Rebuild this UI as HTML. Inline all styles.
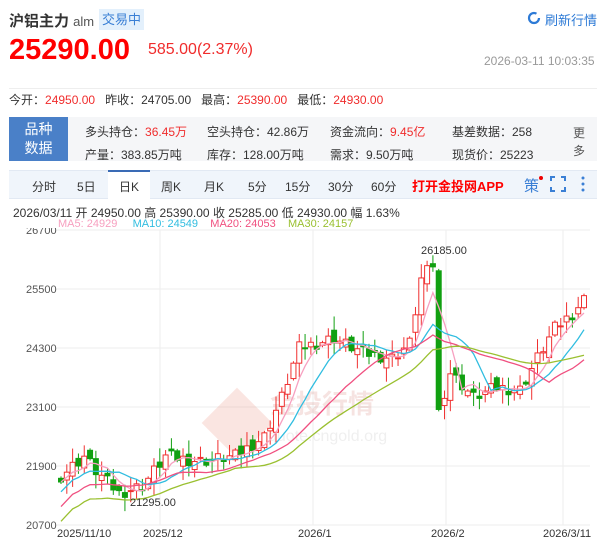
<!DOCTYPE html><html><head><meta charset="utf-8"><style>
*{margin:0;padding:0;box-sizing:border-box}
body{width:600px;height:538px;background:#fff;font-family:"Liberation Sans","Noto Sans CJK SC",sans-serif;position:relative;overflow:hidden;color:#333}
.a{position:absolute;white-space:nowrap}
.r{color:#f02c2c}
</style></head><body>
<div class="a" style="left:9px;top:10px;font-size:15px;font-weight:bold;color:#333">沪铝主力 <span style="font-weight:normal;font-size:13px;color:#555">alm</span></div>
<div class="a" style="left:99px;top:9px;width:45px;height:21px;background:#e3f0fc;color:#3a7fd5;font-size:13px;line-height:21px;text-align:center">交易中</div>
<svg class="a" style="left:527px;top:11px" width="14" height="14" viewBox="0 0 14 14"><circle cx="7" cy="7" r="5" fill="none" stroke="#2d7ad6" stroke-width="2.2" stroke-dasharray="26 6"/></svg>
<div class="a" style="left:545px;top:10px;font-size:13px;color:#2d7ad6">刷新行情</div>
<div class="a" style="left:9px;top:34px;font-size:29px;font-weight:bold;color:#f00">25290.00</div>
<div class="a" style="left:148px;top:41px;font-size:16px;color:#f02c2c">585.00(2.37%)</div>
<div class="a" style="left:484px;top:54px;font-size:12px;color:#999">2026-03-11 10:03:35</div>
<div class="a" style="left:9px;top:88px;width:588px;height:1px;background:#eee"></div>
<div class="a" style="left:9px;top:91px;font-size:12px">今开：<span class="r">24950.00</span>&nbsp;&nbsp; 昨收：24705.00&nbsp;&nbsp; 最高：<span class="r">25390.00</span>&nbsp;&nbsp; 最低：<span class="r">24930.00</span></div>
<div class="a" style="left:9px;top:117px;width:588px;height:44px;background:#f5f6f8"></div>
<div class="a" style="left:9px;top:117px;width:59px;height:44px;background:#4a80c8;color:#fff;font-size:14px;line-height:19px;text-align:center;padding-top:3px">品种<br>数据</div>
<div class="a" style="left:85px;top:121px;font-size:12px;line-height:23px">多头持仓：<span class="r">36.45万</span><br>产量：383.85万吨</div>
<div class="a" style="left:207px;top:121px;font-size:12px;line-height:23px">空头持仓：42.86万<br>库存：128.00万吨</div>
<div class="a" style="left:330px;top:121px;font-size:12px;line-height:23px">资金流向：<span class="r">9.45亿</span><br>需求：9.50万吨</div>
<div class="a" style="left:452px;top:121px;font-size:12px;line-height:23px">基差数据：258<br>现货价：25223</div>
<div class="a" style="left:573px;top:124px;font-size:12px;line-height:18px;color:#555">更<br>多</div>
<div class="a" style="left:9px;top:170px;width:588px;height:29px;background:#f0f5fb;border-top:1px solid #e2e9f3;border-bottom:1px solid #e2e9f3"></div>
<div class="a" style="left:108px;top:170px;width:42px;height:29px;background:#fff;border-top:2px solid #3a6bb5"></div>
<div class="a" style="left:0;top:178px;font-size:12px;color:#333;width:600px">
<span class="a" style="left:32px">分时</span><span class="a" style="left:77px">5日</span><span class="a" style="left:119px">日K</span><span class="a" style="left:161px">周K</span><span class="a" style="left:204px">月K</span><span class="a" style="left:248px">5分</span><span class="a" style="left:285px">15分</span><span class="a" style="left:328px">30分</span><span class="a" style="left:371px">60分</span></div>
<div class="a" style="left:412px;top:176px;font-size:13px;font-weight:bold;color:#f00">打开金投网APP</div>
<div class="a" style="left:524px;top:175px;font-size:15px;color:#3a7fd5">策</div>
<div class="a" style="left:539px;top:176px;width:4px;height:4px;border-radius:2px;background:#e00"></div>
<svg class="a" style="left:550px;top:176px" width="16" height="16" viewBox="0 0 16 16" fill="none" stroke="#3a7fd5" stroke-width="2"><path d="M1 5V1h4M11 1h4v4M15 11v4h-4M5 15H1v-4"/></svg>
<svg class="a" style="left:580px;top:176px" width="6" height="16"><circle cx="3" cy="2" r="1.5" fill="#3a7fd5"/><circle cx="3" cy="8" r="1.5" fill="#3a7fd5"/><circle cx="3" cy="14" r="1.5" fill="#3a7fd5"/></svg>
<div class="a" style="left:13px;top:204px;font-size:12px;color:#333">2026/03/11 开 24950.00 高 25390.00 收 25285.00 低 24930.00 幅 1.63%</div>
<div class="a" style="left:58px;top:218px;font-size:11px"><span style="color:#f7a0c0">MA5: 24929</span>&nbsp;&nbsp;&nbsp;&nbsp; <span style="color:#30bde0">MA10: 24549</span>&nbsp;&nbsp;&nbsp; <span style="color:#f05080">MA20: 24053</span>&nbsp;&nbsp;&nbsp; <span style="color:#9ac030">MA30: 24157</span></div>
<svg id="c" class="a" style="left:0;top:228px" width="600" height="310"></svg>
<script>
var s=document.getElementById('c'),h='';
function Y(p){return 230+(26700-p)*0.04917-228}
var lv=[26700,25500,24300,23100,21900,20700];
lv.forEach(function(v){var y=Y(v);h+='<line x1="55" x2="590" y1="'+y+'" y2="'+y+'" stroke="#eee"/><text x="26" y="'+(y+4)+'" font-size="11" fill="#555">'+v+'</text>';});
[160,313,446,563].forEach(function(x){h+='<line x1="'+x+'" x2="'+x+'" y1="2" y2="297" stroke="#eee"/>'});
h+='<g opacity="0.13"><rect x="212" y="170" width="50" height="50" transform="rotate(45 237 195)" fill="#e04020"/><text x="270" y="185" font-size="26" fill="#c03020" font-weight="bold">金投行情</text><text x="268" y="213" font-size="16" fill="#888">quote.cngold.org</text></g>';
var kp=[[0,21700],[4,22100],[6,21800],[10,21350],[14,21500],[18,22100],[24,22000],[30,22100],[35,22500],[38,23300],[41,24300],[47,24500],[52,24200],[57,24100],[60,24400],[62,25700],[64,26000],[65,23000],[67,23800],[71,23300],[75,23500],[79,23450],[82,24100],[85,24700],[88,25000],[90,25290]];
var n=91,C=[];
for(var i=0;i<n;i++){for(var k=0;k<kp.length-1;k++){if(i>=kp[k][0]&&i<=kp[k+1][0]){var t=(i-kp[k][0])/(kp[k+1][0]-kp[k][0]);C.push(kp[k][1]+t*(kp[k+1][1]-kp[k][1])+((i*37)%11-5)*25);break;}}}
var dx=(584-61)/(n-1);
for(i=0;i<n;i++){var o=i?C[i-1]+((i*53)%7-3)*40:21650,c=C[i],hi=Math.max(o,c)+((i*17)%5)*60+40,lo=Math.min(o,c)-((i*29)%5)*60-40;
if(i==64)hi=26185;if(i==10)lo=21295;
var up=c>=o,col=up?'#f03030':'#11a011',x=61+i*dx,y1=Y(Math.max(o,c)),y2=Y(Math.min(o,c));
h+='<line x1="'+x+'" x2="'+x+'" y1="'+Y(hi)+'" y2="'+Y(lo)+'" stroke="'+col+'"/>';
h+='<rect x="'+(x-2.5)+'" y="'+y1+'" width="5" height="'+Math.max(1,y2-y1)+'" fill="'+(up?'#fff':col)+'" stroke="'+col+'"/>';}
function ma(p,col,b){var d='';for(var i=0;i<n;i++){var sm=0,c=0;for(var j=Math.max(0,i-p+1);j<=i;j++){sm+=C[j];c++}var v=sm/c-(b||0)*(p>5?1:0)*(1-Math.min(1,i/p));d+=(i?'L':'M')+(61+i*dx).toFixed(1)+' '+Y(v).toFixed(1)}h+='<path d="'+d+'" fill="none" stroke="'+col+'" stroke-width="1.3"/>'}
ma(5,'#f7a0c0');ma(10,'#30bde0',200);ma(20,'#f05080',500);ma(30,'#9ac030',800);
h+='<text x="421" y="26" font-size="11" fill="#333">26185.00</text><text x="130" y="278" font-size="11" fill="#333">21295.00</text>';
[['2025/11/10',57],['2025/12',143],['2026/1',298],['2026/2',431],['2026/3/11',543]].forEach(function(a){h+='<text x="'+a[1]+'" y="309" font-size="11" fill="#333">'+a[0]+'</text>'});
s.innerHTML=h;
</script>
</body></html>
